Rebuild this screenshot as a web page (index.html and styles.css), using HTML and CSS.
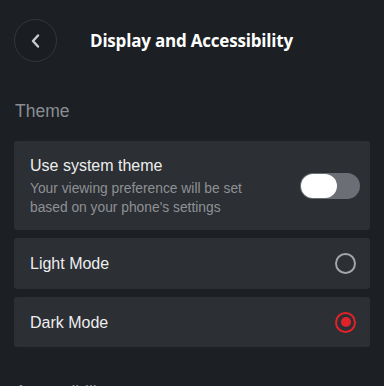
FILE: index.html
```html
<!DOCTYPE html>
<html>
<head>
<meta charset="utf-8">
<link rel="stylesheet" href="styles.css">
</head>
<body>
<header class="topbar">
  <button class="back" aria-label="Back">
    <svg width="12" height="14" viewBox="0 0 12 14"><path d="M8 1.5 L3 7 L8 12.5" fill="none" stroke="#c9cbce" stroke-width="2.4" stroke-linecap="round" stroke-linejoin="round"/></svg>
  </button>
  <h1 class="title">Display and Accessibility</h1>
</header>

<section class="section">
  <h2 class="section-label">Theme</h2>
  <div class="card card-system">
    <div class="card-text">
      <div class="card-title">Use system theme</div>
      <div class="card-sub">Your viewing preference will be set based on your phone's settings</div>
    </div>
    <div class="toggle"><div class="knob"></div></div>
  </div>
  <div class="card card-row">
    <div class="card-title">Light Mode</div>
    <div class="radio"></div>
  </div>
  <div class="card card-row">
    <div class="card-title">Dark Mode</div>
    <div class="radio radio-on"></div>
  </div>
</section>

<section class="section">
  <h2 class="section-label label-2">Accessibility</h2>
</section>
</body>
</html>
```

FILE: styles.css
```css
html, body {
  margin: 0;
  padding: 0;
  background: #1c1f23;
  font-family: "Liberation Sans", Arial, sans-serif;
  overflow: hidden;
}

.topbar {
  display: flex;
  align-items: center;
  padding: 19px 0 0 14px;
  height: 43px;
}

.back {
  width: 43px;
  height: 43px;
  border-radius: 50%;
  border: 1px solid #33373c;
  background: #1a1d21;
  display: flex;
  align-items: center;
  justify-content: center;
  padding: 0;
  margin: 0;
}

.title {
  margin: 0 0 0 33px;
  font-family: "Open Sans", sans-serif;
  font-weight: 700;
  font-size: 17px;
  color: #ffffff;
  letter-spacing: -0.2px;
}

.section {
  padding: 0 14px;
}

.section-label {
  margin: 39px 0 0 1px;
  font-weight: 400;
  font-size: 17.5px;
  line-height: 20px;
  color: #8a8e94;
  height: 20px;
  padding-bottom: 20px;
}

.label-2 {
  margin-top: 35px;
}

.card {
  background: #2c2f33;
  border-radius: 3px;
  margin-bottom: 8px;
  display: flex;
  align-items: center;
  justify-content: space-between;
}

.card-system {
  height: 89px;
  padding: 0 10px 0 16px;
  box-sizing: border-box;
}

.card-text {
  width: 250px;
  margin-top: 1px;
}

.card-title {
  font-size: 16px;
  line-height: 19px;
  color: #eceef0;
}

.card-sub {
  margin-top: 4px;
  font-size: 13.8px;
  line-height: 19px;
  color: #8e9196;
}

.toggle {
  width: 60px;
  height: 26px;
  border-radius: 13px;
  background: #6b6e75;
  position: relative;
}

.knob {
  position: absolute;
  left: 1px;
  top: 1px;
  width: 36px;
  height: 24px;
  border-radius: 12px;
  background: #ffffff;
}

.card-row {
  height: 51px;
  padding: 0 14px 0 16px;
  box-sizing: border-box;
}

.card-row + .card-row {
  height: 50px;
}

.radio {
  width: 21px;
  height: 21px;
  box-sizing: border-box;
  border: 2px solid #a3a6aa;
  border-radius: 50%;
  position: relative;
}

.radio-on {
  border-color: #e0232a;
}

.radio-on::after {
  content: "";
  position: absolute;
  left: 3.5px;
  top: 3.5px;
  width: 10px;
  height: 10px;
  border-radius: 50%;
  background: #e0232a;
}
```
